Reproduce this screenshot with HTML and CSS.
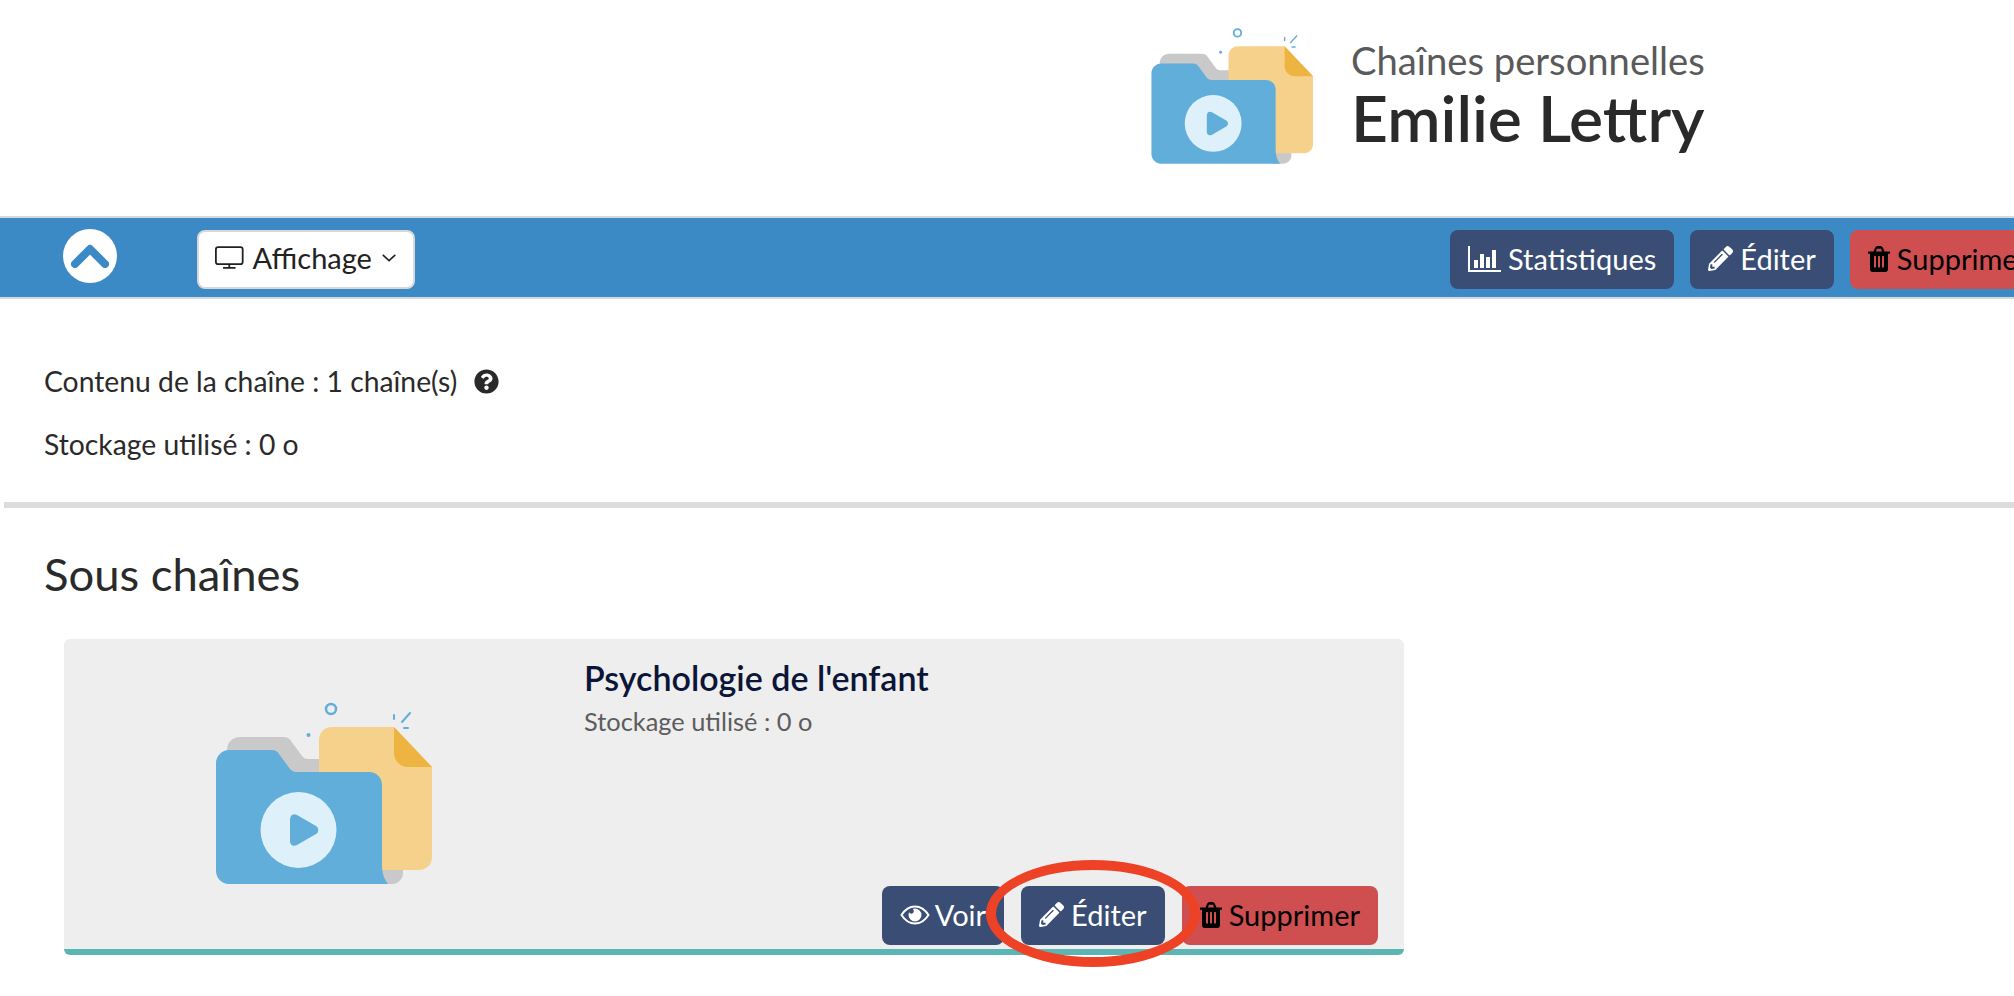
FILE: index.html
```html
<!DOCTYPE html>
<html>
<head>
    <title>Emilie Lettry - Chaînes personnelles</title>
    <link rel="stylesheet" href="styles.css">
</head>
<body>
    <svg class="defs" width="0" height="0">
        <symbol id="folder" viewBox="0 0 270 220">
            <circle cx="141" cy="29" r="5" fill="none" stroke="#62aedb" stroke-width="2.5"/>
            <circle cx="118.500" cy="55" r="2" fill="#62aedb"/>
            <path d="M204 35v4M212 42l8-9M214 48h4" fill="none" stroke="#62aedb" stroke-width="2" stroke-linecap="round"/>
            <path d="M37 70c0-8 6-13 13-13h44c3 0 5 1 7 4l11 15c2 2 3 3 6 3h24v30H37z" fill="#c9c9c9"/>
            <path d="M188 185h25v8c0 6-5 11-11 11h-14z" fill="#c9c9c9"/>
            <path d="M129 60c0-7 5-13 13-13h62l38 40v90c0 8-6 13-13 13h-100z" fill="#f5d18c"/>
            <path d="M204 47l38 40h-24c-8 0-14-6-14-14z" fill="#eeb441"/>
            <path d="M26 83c0-7 6-13 13-13h43c3 0 5 1 7 4l11 15c2 2 4 3 6 3h73c8 0 13 6 13 13v80c0 8 2 14 6 19H39c-7 0-13-6-13-13z" fill="#61aedb"/>
            <circle cx="108.500" cy="150" r="38" fill="#def0fa"/>
            <path d="M100 140c0-5 3-7 7-5l19 11c3 2 3 6 0 8l-19 11c-4 2-7 0-7-4z" fill="#61aedb"/>
        </symbol>
        <symbol id="pencil" viewBox="0 0 512 512">
            <path fill="currentColor" d="M497.9 142.1l-46.1 46.1c-4.7 4.7-12.3 4.7-17 0l-111-111c-4.7-4.7-4.7-12.3 0-17l46.1-46.1c18.7-18.7 49.1-18.7 67.9 0l60.1 60.1c18.8 18.7 18.8 49.1 0 67.9zM284.2 99.8L21.6 362.4.4 483.9c-2.9 16.4 11.4 30.6 27.8 27.8l121.5-21.3 262.6-262.6c4.7-4.7 4.7-12.3 0-17l-111-111c-4.8-4.7-12.4-4.7-17.1 0zM124.1 339.9c-5.5-5.5-5.5-14.3 0-19.8l154-154c5.5-5.5 14.3-5.5 19.8 0s5.5 14.3 0 19.8l-154 154c-5.5 5.5-14.3 5.5-19.8 0zM88 424h48v36.3l-64.5 11.3-31.1-31.1L51.7 376H88v48z"/>
        </symbol>
        <symbol id="trash" viewBox="0 0 22 26">
            <path fill="currentColor" fill-rule="evenodd" d="M0 5.500h5.500l1.300-3.200C7.300 1 8.300 0 9.500 0h3c1.200 0 2.200 1 2.700 2.300l1.300 3.200H22v2.300h-2V23c0 1.700-1.100 3-2.500 3h-13C3.100 26 2 24.700 2 23V7.800H0zM8 5.500h6l-.9-2.400c-.1-.2-.3-.4-.5-.4H9.400c-.2 0-.4.200-.5.400zM6 10.500v10.500c0 .4.200.6.500.6h1c.3 0 .5-.2.5-.6V10.500c0-.4-.2-.6-.5-.6h-1c-.3 0-.5.200-.5.600zm4 0v10.500c0 .4.200.6.500.6h1c.3 0 .5-.2.500-.6V10.500c0-.4-.2-.6-.5-.6h-1c-.3 0-.5.200-.5.600zm4 0v10.500c0 .4.200.6.500.6h1c.3 0 .5-.2.500-.6V10.500c0-.4-.2-.6-.5-.6h-1c-.3 0-.5.200-.5.600z"/>
        </symbol>
        <symbol id="bars" viewBox="0 0 33 26">
            <path fill="currentColor" d="M0 0h2v24h31v2H0zM6 14h4v8H6zM12 8h4v14h-4zM18 11h4v11h-4zM24 4h4v18h-4z"/>
        </symbol>
        <symbol id="eye" viewBox="0 0 30 20">
            <path fill="none" stroke="currentColor" stroke-width="2" d="M1.500 10C5 4.500 9.500 1.500 15 1.500S25 4.500 28.500 10C25 15.500 20.500 18.500 15 18.500S5 15.500 1.500 10z"/>
            <path fill="currentColor" d="M15 3.500a6.500 6.500 0 1 1-6.500 6.500c0-1 .2-1.900.6-2.700a2.500 2.500 0 1 0 3.500-3.300c.7-.3 1.500-.5 2.400-.5z"/>
        </symbol>
    </svg>

    <header class="page-header">
        <svg class="header-logo"><use href="#folder"/></svg>
        <div class="header-text">
            <div class="header-sub">Chaînes personnelles</div>
            <h1 class="header-name">Emilie Lettry</h1>
        </div>
    </header>

    <nav class="toolbar">
        <a class="back-top">
            <svg width="38" height="24" viewBox="0 0 38 24"><path d="M4 20L19 5l15 15" fill="none" stroke="#3c8ac5" stroke-width="8" stroke-linecap="round" stroke-linejoin="round"/></svg>
        </a>
        <button class="display-btn">
            <svg class="desktop-icon" width="32" height="25" viewBox="0 0 32 25">
                <rect x="1" y="1" width="30" height="19" rx="2.500" fill="none" stroke="#222" stroke-width="2"/>
                <path d="M16 20v4M9 24h14" fill="none" stroke="#222" stroke-width="2"/>
            </svg>
            Affichage
            <svg width="18" height="10" viewBox="0 0 18 10"><path d="M2 1.500l7 6.500 7-6.500" fill="none" stroke="#222" stroke-width="1.800"/></svg>
        </button>
        <div class="toolbar-actions">
            <a class="btn btn-dark"><svg class="icon icon-bars"><use href="#bars"/></svg>Statistiques</a>
            <a class="btn btn-dark"><svg class="icon"><use href="#pencil"/></svg>Éditer</a>
            <a class="btn btn-red"><svg class="icon icon-trash"><use href="#trash"/></svg>Supprimer</a>
        </div>
    </nav>

    <section class="channel-info">
        <p class="info-line">Contenu de la chaîne : 1 chaîne(s)
            <svg class="help-icon" viewBox="0 0 512 512"><path fill="#2a2a2a" d="M504 256c0 136.997-111.043 248-248 248S8 392.997 8 256C8 119.083 119.043 8 256 8s248 111.083 248 248zM262.655 90c-54.497 0-89.255 22.957-116.549 63.758-3.536 5.286-2.353 12.415 2.715 16.258l34.699 26.31c5.205 3.947 12.621 3.008 16.665-2.122 17.864-22.658 30.113-35.797 57.303-35.797 20.429 0 45.698 13.148 45.698 32.958 0 14.976-12.363 22.667-32.534 33.976C247.128 238.528 216 254.941 216 296v4c0 6.627 5.373 12 12 12h56c6.627 0 12-5.373 12-12v-1.333c0-28.462 83.186-29.647 83.186-106.667 0-58.002-60.165-102-116.531-102zM256 338c-25.365 0-46 20.635-46 46 0 25.364 20.635 46 46 46s46-20.636 46-46c0-25.365-20.635-46-46-46z"/></svg>
        </p>
        <p class="info-line">Stockage utilisé : 0 o</p>
    </section>

    <hr class="divider">

    <h2 class="section-title">Sous chaînes</h2>

    <article class="card">
        <svg class="card-thumb"><use href="#folder"/></svg>
        <div class="card-body">
            <h3 class="card-title">Psychologie de l'enfant</h3>
            <div class="card-meta">Stockage utilisé : 0 o</div>
            <div class="card-actions">
                <a class="btn btn-dark btn-voir"><svg class="icon icon-eye"><use href="#eye"/></svg>Voir</a>
                <a class="btn btn-dark btn-edit"><svg class="icon"><use href="#pencil"/></svg>Éditer</a>
                <a class="btn btn-red"><svg class="icon icon-trash"><use href="#trash"/></svg>Supprimer</a>
            </div>
        </div>
        <div class="highlight-ring"></div>
    </article>
</body>
</html>
```

FILE: styles.css
```css
* {
    box-sizing: border-box;
}
html, body {
    height: 996px;
    overflow: hidden;
}
body {
    margin: 0;
    background: #fff;
    color: #2a2a2a;
    font-family: Lato, "Open Sans", sans-serif;
    font-size: 28.3px;
}
.defs {
    position: absolute;
}

/* header */
.page-header {
    display: flex;
    height: 216px;
    padding: 11px 0 0 1132px;
}
.header-logo {
    width: 202px;
    height: 165px;
    flex-shrink: 0;
}
.header-text {
    margin: 27px 0 0 17px;
    white-space: nowrap;
}
.header-sub {
    font-size: 38.2px;
    line-height: 44px;
    color: #5a5a5a;
}
.header-name {
    margin: 0;
    font-size: 64.2px;
    font-weight: 600;
    line-height: 72px;
    color: #2a2a2a;
}

/* toolbar */
.toolbar {
    display: flex;
    align-items: center;
    height: 83px;
    padding: 4px 0 0 63px;
    background: #3c8ac5;
    border-top: 2px solid #d6d9dc;
    border-bottom: 2px solid #d6d9dc;
}
.back-top {
    display: flex;
    align-items: center;
    justify-content: center;
    width: 54px;
    height: 54px;
    margin-top: -7px;
    border-radius: 50%;
    background: #fff;
    flex-shrink: 0;
}
.display-btn {
    display: flex;
    align-items: center;
    gap: 9px;
    width: 218px;
    height: 59px;
    margin-left: 80px;
    padding: 0 16px 4px;
    background: #fff;
    border: 2px solid #d8d8d8;
    border-radius: 8px;
    color: #222;
    font-family: inherit;
    font-size: 29px;
    flex-shrink: 0;
}
.toolbar-actions {
    display: flex;
    gap: 16px;
    margin-left: 1035px;
    flex-shrink: 0;
}

/* buttons */
.btn {
    display: flex;
    align-items: center;
    gap: 7px;
    height: 59px;
    padding: 0 18px 2px;
    border-radius: 8px;
    font-size: 29px;
    white-space: nowrap;
    flex-shrink: 0;
}
.btn-dark {
    background: #3a4d75;
    color: #fff;
}
.btn-red {
    background: #cf4f51;
    color: #000;
}
.btn-voir {
    gap: 5px;
}
.icon {
    width: 25px;
    height: 25px;
    flex-shrink: 0;
}
.icon-bars {
    width: 33px;
    height: 26px;
}
.icon-trash {
    width: 22px;
    height: 26px;
}
.icon-eye {
    width: 30px;
    height: 20px;
}

/* channel info */
.channel-info {
    padding: 68px 0 0 44px;
}
.info-line {
    display: flex;
    align-items: center;
    gap: 17px;
    margin: 0 0 34px;
    line-height: 29px;
}
.help-icon {
    width: 25px;
    height: 25px;
}
.divider {
    height: 6px;
    margin: 43px 0 0 4px;
    border: 0;
    background: #dcdcdc;
}
.section-title {
    margin: 39px 0 38px 44px;
    font-size: 45.4px;
    font-weight: 400;
    line-height: 54px;
}

/* card */
.card {
    position: relative;
    display: flex;
    width: 1340px;
    height: 316px;
    margin-left: 64px;
    background: #eee;
    border-bottom: 6px solid #5bb5b5;
    border-radius: 6px;
}
.card-thumb {
    width: 270px;
    height: 220px;
    margin: 41px 0 0 126px;
    flex-shrink: 0;
}
.card-body {
    display: flex;
    flex-direction: column;
    flex: 1;
    margin-left: 124px;
    padding: 19px 26px 4px 0;
}
.card-title {
    margin: 0;
    font-size: 34px;
    font-weight: 600;
    line-height: 40px;
    color: #0a1537;
}
.card-meta {
    margin-top: 7px;
    font-size: 25.4px;
    line-height: 32px;
    color: #5c5c5c;
}
.card-actions {
    display: flex;
    justify-content: flex-end;
    gap: 17px;
    margin-top: auto;
}
.highlight-ring {
    position: absolute;
    left: 922px;
    top: 221px;
    width: 214px;
    height: 107px;
    border: 10px solid #ee4227;
    border-radius: 50%;
}
```
